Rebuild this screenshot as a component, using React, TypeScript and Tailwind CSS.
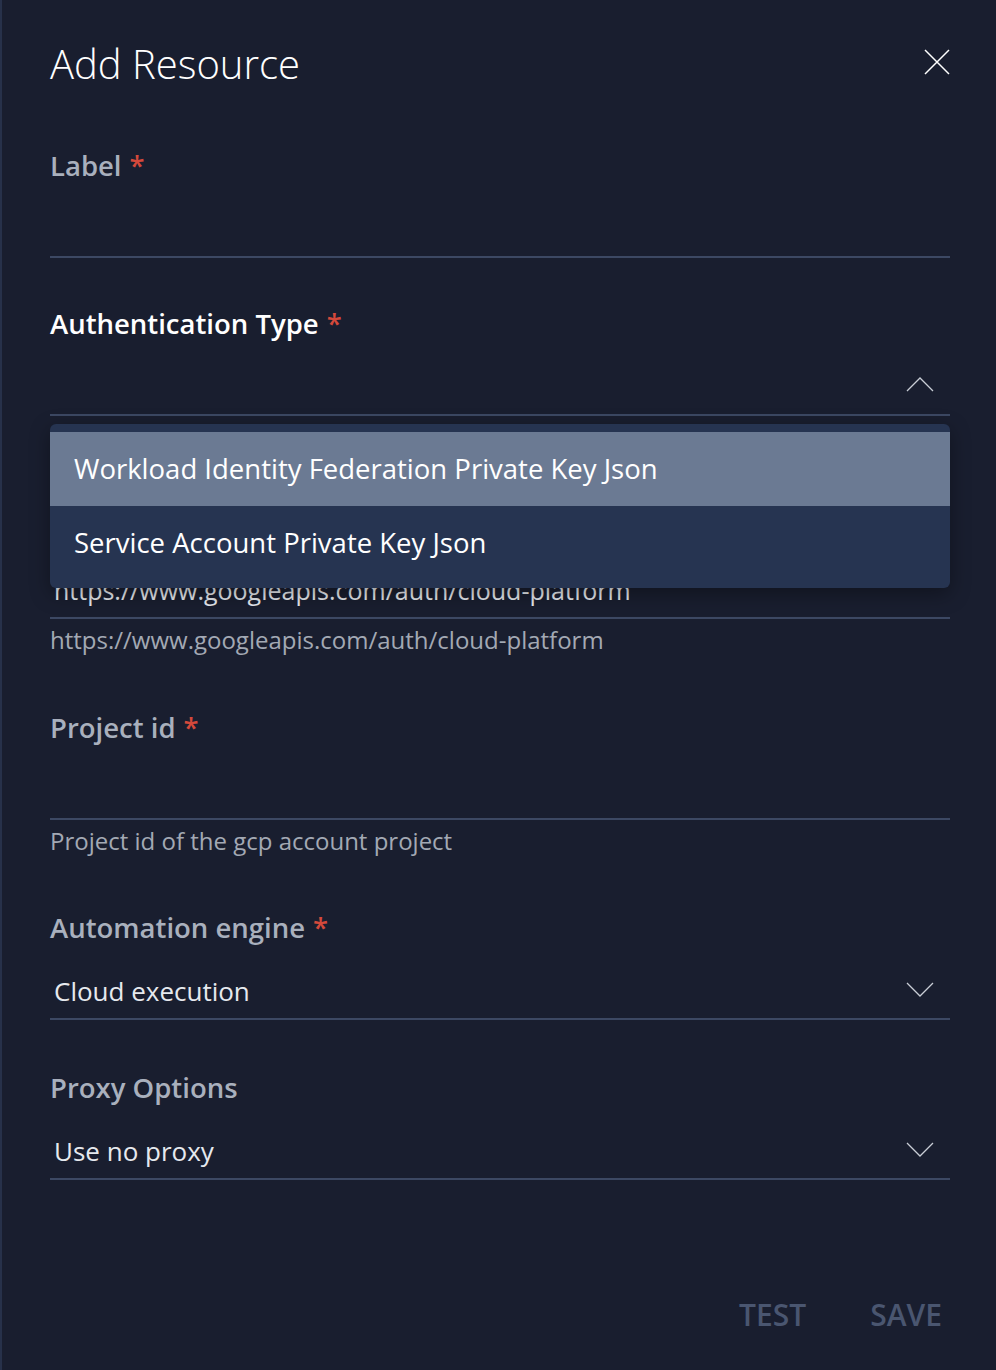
function Req() {
  return <span className="ml-2 text-[#d4493b]">*</span>;
}

function Chevron({ up }: { up?: boolean }) {
  return (
    <svg width="28" height="16" viewBox="0 0 28 16" fill="none" className="text-[#c9ced6]">
      <polyline
        points={up ? '1,15 14,2 27,15' : '1,1 14,14 27,1'}
        stroke="currentColor"
        strokeWidth="1.3"
      />
    </svg>
  );
}

interface FieldProps {
  label: string;
  required?: boolean;
  bright?: boolean;
  value?: string;
  small?: boolean;
  chevron?: 'up' | 'down';
}

function Field({ label, required, bright, value, small, chevron }: FieldProps) {
  return (
    <div>
      <div
        className={`h-[40px] text-[27.5px] leading-[40px] font-semibold ${
          bright ? 'text-white' : 'text-[#a9b0bd]'
        }`}
      >
        {label}
        {required && <Req />}
      </div>
      <div className="flex h-[72px] items-end justify-between border-b-2 border-[#3c4863] pb-[10px] pl-1 pr-4">
        <span className={`${small ? 'text-[25px]' : 'text-[26px]'} leading-[34px] text-[#e6e9ee]`}>
          {value}
        </span>
        {chevron === 'down' && (
          <span className="mb-[10px]">
            <Chevron />
          </span>
        )}
        {chevron === 'up' && (
          <span className="mb-[12px]">
            <Chevron up />
          </span>
        )}
      </div>
    </div>
  );
}

export default function App() {
  return (
    <div
      className="min-h-screen w-full border-l-2 border-[#27314a] bg-[#191e2f] pl-[48px] pr-[46px]"
      style={{ fontFamily: '"Open Sans", "Liberation Sans", sans-serif' }}
    >
      {/* Header */}
      <div className="flex items-start justify-between pt-[36px]">
        <h1 className="text-[40px] font-light leading-[56px] text-white">Add Resource</h1>
        <svg width="26" height="26" viewBox="0 0 26 26" className="mt-[13px] text-white">
          <path d="M1 1L25 25M25 1L1 25" stroke="currentColor" strokeWidth="1.5" />
        </svg>
      </div>

      <div className="mt-[54px]">
        <Field label="Label" required />
      </div>

      <div className="relative mt-[46px]">
        <Field label="Authentication Type" required bright chevron="up" />

        {/* Open dropdown menu */}
        <div className="absolute left-0 right-0 top-[120px] z-10 rounded-md bg-[#263451] py-2 shadow-[0_6px_20px_rgba(0,0,0,0.35)]">
          <div className="flex h-[74px] items-center bg-[#6b7a93] px-6 text-[27.5px] text-white">
            Workload Identity Federation Private Key Json
          </div>
          <div className="flex h-[74px] items-center px-6 text-[27.5px] text-white">
            Service Account Private Key Json
          </div>
        </div>
      </div>

      <div className="mt-[91px]">
        <Field label="Scopes" required small value="https://www.googleapis.com/auth/cloud-platform" />
        <div className="mt-[6px] text-[24px] leading-[30px] text-[#a3a9b4]">
          https://www.googleapis.com/auth/cloud-platform
        </div>
      </div>

      <div className="mt-[53px]">
        <Field label="Project id" required />
        <div className="mt-[6px] text-[24px] leading-[30px] text-[#a3a9b4]">
          Project id of the gcp account project
        </div>
      </div>

      <div className="mt-[52px]">
        <Field label="Automation engine" required value="Cloud execution" chevron="down" />
      </div>

      <div className="mt-[48px]">
        <Field label="Proxy Options" value="Use no proxy" chevron="down" />
      </div>

      {/* Footer actions */}
      <div className="mt-[112px] flex justify-end gap-[64px] pr-[8px]">
        <button className="text-[30px] font-semibold text-[#4a5670]">TEST</button>
        <button className="text-[30px] font-semibold text-[#4a5670]">SAVE</button>
      </div>
    </div>
  );
}
